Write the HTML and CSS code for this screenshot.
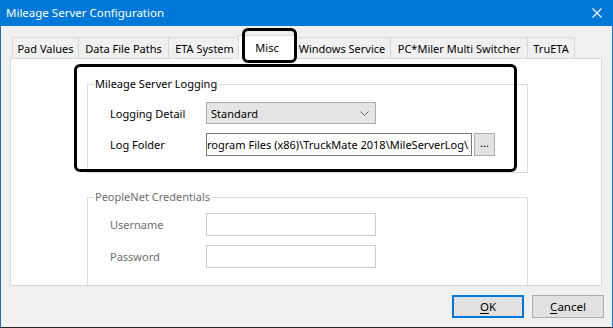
FILE: index.html
```html
<!DOCTYPE html>
<html lang="en">
<head>
    <meta charset="UTF-8">
    <title>Mileage Server Configuration</title>
    <link rel="stylesheet" href="styles.css">
</head>
<body>
    <div class="window">
        <div class="titlebar">
            <span class="title">Mileage Server Configuration</span>
            <svg class="close" width="10" height="10" viewBox="0 0 10 10">
                <path d="M0.5 0.5 L9.5 9.5 M9.5 0.5 L0.5 9.5" stroke="#fff" stroke-width="1.1" fill="none"/>
            </svg>
        </div>

        <div class="content">
            <div class="tabs">
                <div class="tab">Pad Values</div>
                <div class="tab">Data File Paths</div>
                <div class="tab">ETA System</div>
                <div class="tab active">Misc</div>
                <div class="tab">Windows Service</div>
                <div class="tab">PC*Miler Multi Switcher</div>
                <div class="tab">TruETA</div>
            </div>

            <div class="panel">
                <fieldset class="group logging">
                    <legend>Mileage Server Logging</legend>
                    <div class="row">
                        <label>Logging Detail</label>
                        <div class="combo">
                            <span>Standard</span>
                            <svg width="9" height="5" viewBox="0 0 9 5">
                                <path d="M0.5 0.5 L4.5 4.5 L8.5 0.5" stroke="#606060" stroke-width="1" fill="none"/>
                            </svg>
                        </div>
                    </div>
                    <div class="row folder-row">
                        <label>Log Folder</label>
                        <div class="textbox path">
                            <span>Program Files (x86)\TruckMate 2018\MileServerLog\</span>
                        </div>
                        <button class="browse">...</button>
                    </div>
                </fieldset>

                <fieldset class="group disabled">
                    <legend>PeopleNet Credentials</legend>
                    <div class="row">
                        <label>Username</label>
                        <div class="textbox short"></div>
                    </div>
                    <div class="row">
                        <label>Password</label>
                        <div class="textbox short"></div>
                    </div>
                </fieldset>
            </div>

            <div class="buttons">
                <button class="btn default"><u>O</u>K</button>
                <button class="btn"><u>C</u>ancel</button>
            </div>
        </div>

        <!-- annotation outlines -->
        <div class="mark mark-tab"></div>
        <div class="mark mark-group"></div>
    </div>
</body>
</html>
```

FILE: styles.css
```css
* {
    margin: 0;
    padding: 0;
    box-sizing: border-box;
}

body {
    font-family: "Noto Sans", "Open Sans", sans-serif;
    font-size: 11px;
    color: #000;
    background: #f0f0f0;
    width: 613px;
    height: 328px;
    overflow: hidden;
}

.window {
    position: relative;
    width: 613px;
    height: 328px;
    background: #f0f0f0;
    border: 1px solid #1a6fc0;
    border-bottom-color: #262626;
}

.titlebar {
    height: 26px;
    margin: -1px -1px 0 -1px;
    background: #0078d7;
    color: #fff;
    display: flex;
    align-items: center;
    justify-content: space-between;
    padding: 0 11px 0 6px;
}

.title {
    font-size: 11.5px;
    line-height: 16px;
}

.content {
    padding: 9px 10px 0 9px;
}

/* tabs */
.tabs {
    display: flex;
    align-items: flex-end;
    height: 23px;
    padding-left: 2px;
}

.tab {
    height: 21px;
    line-height: 21px;
    text-align: center;
    white-space: nowrap;
    background: #f0f0f0;
    border: 1px solid #d9d9d9;
    border-left: none;
    border-bottom: none;
}

.tab:first-child {
    border-left: 1px solid #d9d9d9;
}

.tab:nth-child(1) { width: 67px; }
.tab:nth-child(2) { width: 90px; }
.tab:nth-child(3) { width: 72px; }
.tab:nth-child(5) { width: 97px; }
.tab:nth-child(6) { width: 137px; }
.tab:nth-child(7) { width: 47px; }

.tab.active {
    position: relative;
    z-index: 1;
    width: 58px;
    height: 24px;
    margin: 0 -2px -1px -3px;
    line-height: 24px;
    background: #fff;
    border-left: 1px solid #d9d9d9;
}

.panel {
    height: 228px;
    background: #fff;
    border: 1px solid #d9d9d9;
    padding: 17px 0 0 76px;
    overflow: hidden;
}

/* group boxes */
.group {
    width: 441px;
    border: 1px solid #dcdcdc;
}

.group legend {
    margin-left: 6px;
    padding: 0 1px;
    line-height: 16px;
}

.logging {
    height: 97px;
    margin-bottom: 16px;
}

.disabled {
    height: 100px;
    border-bottom: none;
    color: #6d6d6d;
}

.row {
    display: flex;
    align-items: center;
    height: 22px;
    margin-top: 9px;
    padding-left: 22px;
}

.logging .row:first-of-type {
    margin-top: 10px;
}

.disabled .row:first-of-type {
    margin-top: 8px;
}

.disabled .row + .row {
    margin-top: 10px;
}

.row.folder-row {
    height: 23px;
}

.row label {
    width: 96px;
    flex: none;
}

.combo {
    width: 170px;
    height: 22px;
    background: #e5e5e5;
    border: 1px solid #adadad;
    display: flex;
    align-items: center;
    justify-content: space-between;
    padding: 0 6px 0 4px;
}

.textbox {
    height: 23px;
    background: #fff;
    border: 1px solid #7a7a7a;
}

.textbox.path {
    width: 266px;
    display: flex;
    justify-content: flex-end;
    align-items: center;
    overflow: hidden;
    white-space: nowrap;
    padding-right: 3px;
}

.textbox.short {
    width: 170px;
    height: 23px;
    border-color: #cccccc;
}

.browse {
    width: 21px;
    height: 23px;
    margin-left: 2px;
    font-family: inherit;
    font-size: 11px;
    line-height: 14px;
    background: #e1e1e1;
    border: 1px solid #adadad;
    padding-bottom: 4px;
}

/* dialog buttons */
.buttons {
    display: flex;
    justify-content: flex-end;
    gap: 8px;
    margin-top: 9px;
    margin-right: -2px;
}

.btn {
    width: 72px;
    height: 23px;
    font-family: inherit;
    font-size: 11.5px;
    color: #000;
    background: #e1e1e1;
    border: 1px solid #adadad;
}

.btn.default {
    border: 2px solid #0078d7;
}

.btn u {
    text-decoration-thickness: 1px;
    text-underline-offset: 2px;
}

/* black highlight boxes drawn over the screenshot */
.mark {
    position: absolute;
    border: 3px solid #000;
    border-radius: 6px;
    z-index: 5;
}

.mark-tab {
    left: 241px;
    top: 27px;
    width: 55px;
    height: 35px;
}

.mark-group {
    left: 73px;
    top: 63px;
    width: 443px;
    height: 108px;
}
```
